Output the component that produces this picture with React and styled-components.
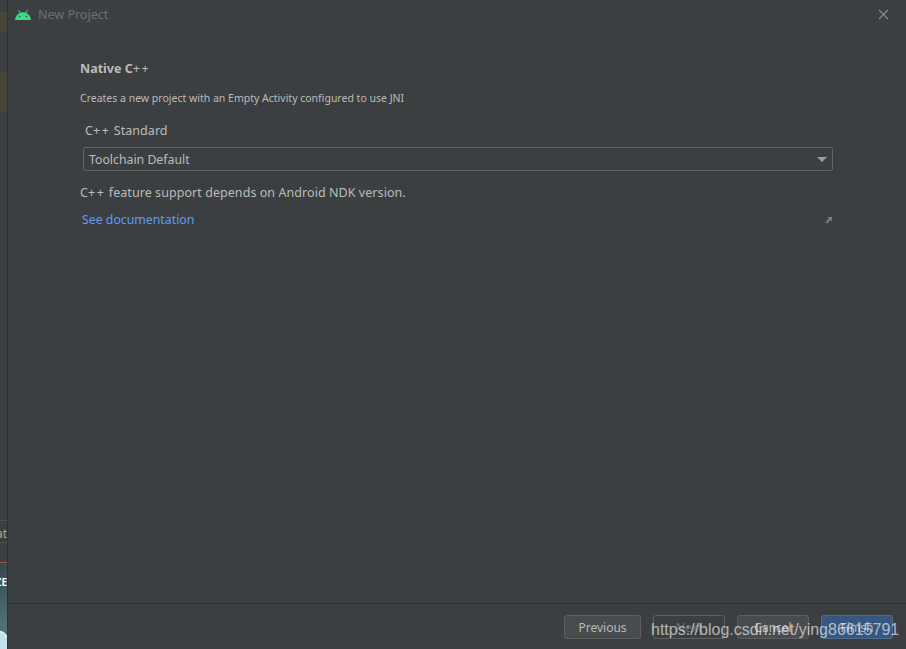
import React from 'react';
import styled, { createGlobalStyle } from 'styled-components';

const Global = createGlobalStyle`
  html, body {
    margin: 0;
    padding: 0;
    background: #3c3f41;
  }
`;

const Page = styled.div`
  position: relative;
  display: flex;
  width: 906px;
  height: 649px;
  overflow: hidden;
  font-family: "Noto Sans", "Open Sans", sans-serif;
`;

const BackWindow = styled.div`
  display: flex;
  flex-direction: column;
  flex: none;
  width: 7px;
  background: #3c3f41;
  border-right: 1px solid #2f3133;
  overflow: hidden;
`;

const Patch = styled.div`
  flex: none;
  height: ${(p) => p.$h}px;
  margin-top: ${(p) => p.$top}px;
  background: #4a453b;
`;

const Scrap = styled.div`
  flex: none;
  margin-top: 408px;
  height: 21px;
  line-height: 25px;
  font-size: 12px;
  color: #a9a493;
  white-space: nowrap;
  direction: rtl;
  border-top: 1px solid #55504a;
  border-bottom: 1px solid #55504a;
`;

const Wallpaper = styled.div`
  flex: 1;
  margin-top: 19px;
  background: linear-gradient(160deg, #35474d, #4f7077 70%);
  border-top: 1px solid #a0563f;
  position: relative;
  color: #fff;
  font-size: 10px;
  font-weight: 700;
  line-height: 14px;
  padding-top: 12px;
  direction: rtl;
  white-space: nowrap;
`;

const Globe = styled.div`
  position: absolute;
  left: -9px;
  bottom: -8px;
  width: 16px;
  height: 24px;
  border-radius: 50%;
  background: #bfe2ea;
  border: 1px solid #fff;
`;

const Dialog = styled.div`
  flex: 1;
  display: flex;
  flex-direction: column;
  min-width: 0;
`;

const TitleBar = styled.div`
  flex: none;
  height: 29px;
  display: flex;
  align-items: center;
  padding: 0 17px 0 7px;
  gap: 7px;
`;

const Title = styled.div`
  flex: 1;
  font-size: 12.5px;
  color: #6e7072;
`;

const Content = styled.div`
  flex: 1;
  display: flex;
  flex-direction: column;
  padding: 31px 73px 0 72px;
`;

const Heading = styled.div`
  font-size: 12.5px;
  line-height: 18px;
  font-weight: 700;
  color: #bbbbbb;
`;

const Plus = styled.span`
  letter-spacing: 1.6px;
  font-weight: 400;
`;

const Description = styled.div`
  margin-top: 13px;
  font-size: 10.5px;
  line-height: 14px;
  color: #bbbbbb;
`;

const FieldLabel = styled.div`
  margin: 17px 0 0 5px;
  font-size: 12.5px;
  line-height: 18px;
  letter-spacing: 0.05px;
  color: #bbbbbb;
`;

const Select = styled.div`
  margin: 7px 0 0 3px;
  height: 22px;
  display: flex;
  align-items: center;
  justify-content: space-between;
  padding: 0 5px;
  border: 1px solid #646464;
  border-radius: 2px;
  font-size: 12.3px;
  color: #bbbbbb;
`;

const Caret = styled.span`
  width: 0;
  height: 0;
  border-left: 5px solid transparent;
  border-right: 5px solid transparent;
  border-top: 5px solid #9a9da0;
`;

const Note = styled.div`
  margin-top: 13px;
  font-size: 12.5px;
  line-height: 18px;
  letter-spacing: 0.06px;
  color: #bbbbbb;
`;

const LinkRow = styled.div`
  margin-top: 9px;
  display: flex;
  align-items: center;
  justify-content: space-between;
  padding-left: 2px;
`;

const DocLink = styled.a`
  font-size: 12.3px;
  line-height: 18px;
  color: #589df6;
`;

const Footer = styled.div`
  box-sizing: border-box;
  flex: none;
  height: 46px;
  display: flex;
  align-items: flex-start;
  justify-content: flex-end;
  gap: 12px;
  padding: 11px 13px 0 0;
  border-top: 1px solid #323232;
`;

const Button = styled.div`
  box-sizing: border-box;
  width: ${(p) => p.$w}px;
  height: 24px;
  display: flex;
  align-items: center;
  justify-content: center;
  border-radius: 3px;
  font-size: 12px;
  border: 1px solid ${(p) => (p.$primary ? '#4c708c' : '#5e6060')};
  background: ${(p) => (p.$primary ? '#365880' : p.$ghost ? 'transparent' : '#494c4e')};
  color: ${(p) => (p.$ghost ? '#6e7072' : '#bbbbbb')};
`;

const Watermark = styled.div`
  position: absolute;
  left: 651px;
  top: 620px;
  font-family: "Liberation Sans", Arial, sans-serif;
  font-size: 16px;
  line-height: 20px;
  color: rgba(255, 255, 255, 0.62);
  white-space: nowrap;
`;

const AndroidIcon = () => (
  <svg width="16" height="12" viewBox="0 0 16 12">
    <path d="M0 11 C0.5 6.5 4 3.2 8 3.2 C12 3.2 15.5 6.5 16 11 Z" fill="#3ddc84" />
    <path d="M3.6 1 L5.2 4 M12.4 1 L10.8 4" stroke="#3ddc84" strokeWidth="1" fill="none" />
    <circle cx="4.6" cy="7.5" r="0.8" fill="#3c3f41" />
    <circle cx="11.4" cy="7.5" r="0.8" fill="#3c3f41" />
  </svg>
);

const CloseIcon = () => (
  <svg width="11" height="11" viewBox="0 0 11 11">
    <path d="M1 1 L10 10 M10 1 L1 10" stroke="#8c8f91" strokeWidth="1.1" />
  </svg>
);

const ExternalIcon = () => (
  <svg width="8" height="8" viewBox="0 0 8 8">
    <path d="M2.5 1 H7 V5.5 L5.5 4 L2 7.5 L0.5 6 L4 2.5 Z" fill="#7c7f82" />
  </svg>
);

const App = () => {
  return (
    <Page>
      <Global />
      <BackWindow>
        <Patch $top={12} $h={20} />
        <Patch $top={40} $h={40} />
        <Scrap>at</Scrap>
        <Wallpaper>
          ZE
          <Globe />
        </Wallpaper>
      </BackWindow>
      <Dialog>
        <TitleBar>
          <AndroidIcon />
          <Title>New Project</Title>
          <CloseIcon />
        </TitleBar>
        <Content>
          <Heading>Native C<Plus>++</Plus></Heading>
          <Description>Creates a new project with an Empty Activity configured to use JNI</Description>
          <FieldLabel>C<Plus>++</Plus> Standard</FieldLabel>
          <Select>
            Toolchain Default
            <Caret />
          </Select>
          <Note>C<Plus>++</Plus> feature support depends on Android NDK version.</Note>
          <LinkRow>
            <DocLink>See documentation</DocLink>
            <ExternalIcon />
          </LinkRow>
        </Content>
        <Footer>
          <Button $w={77}>Previous</Button>
          <Button $w={72} $ghost>Next</Button>
          <Button $w={72}>Cancel</Button>
          <Button $w={72} $primary>Finish</Button>
        </Footer>
      </Dialog>
      <Watermark>https://blog.csdn.net/ying86615791</Watermark>
    </Page>
  );
};

export default App;
